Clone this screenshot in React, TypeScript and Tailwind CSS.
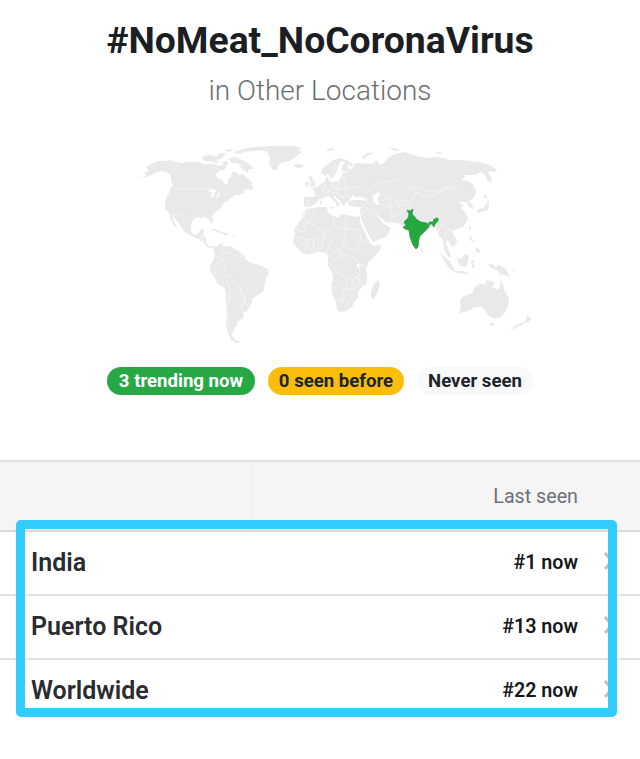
const land = [
  // North and Central America
  'M137 179L143 177 147 175 144 173 149 171 146 167 151 164 158 161 164 161 170 160 176 162 182 163 189 162 197 162 205 164 213 164 219 166 224 164 227 166 225 169 219 171 216 174 217 178 222 180 225 185 228 183 228 179 231 177 232 172 236 172 239 175 243 174 247 178 252 182 252 185 246 187 240 189 238 191 243 191 245 193 239 195 235 195 231 198 228 201 224 203 222 206 220 209 214 213 212 216 213 220 212 224 209 219 205 217 201 218 198 217 193 220 191 225 191 231 194 235 198 234 200 230 204 229 203 235 206 238 206 243 209 246 216 246 213 248 207 247 203 242 198 239 192 236 186 233 182 228 177 221 174 217 172 216 174 222 177 227 175 227 171 220 169 213 165 208 165 203 167 197 170 191 171 187 173 186 171 180 171 175 167 172 162 171 157 172 151 175 146 177Z',
  'M235 189l6-2 8-4 4 4 0 3-5-1-3 1-5 2z',
  'M202 157l6-2 7 1 4-1 6 2-5 2-5 1 6 2-6 1-5-2-6 0zM229 158l6-1 7 3 7 4 5 5-5 0-1 4-4-3-5-3 3-1-5-3-6 0zM222 162l4-1 3 3-4 2zM233 152l8-2 6-2 8-1 5 1-9 2-6 2-5 2-6-1zM217 154l5-1 5 1-5 2zM224 150l6-1 3 1-5 2z',
  'M238 152l6-3 12-2 14-1 12 0 13 0 6 2-2 2 3 2-5 3-2 3-6 3-6 1-4 3-3 6-4-2-3-6 1-5-3-6-5-2-9 1z',
  'M294 165l4-1 5 1 0 2-4 1-5-1zM209 230l5-1 6 2 5 2-6 0-4-2zM221 233l6 0 3 2-5 0zM232 235l3 0 0 1-3 0zM238 240l1 3',
  // South America
  'M213 248L217 247 219 244 222 243 224 246 231 246 235 249 240 252 243 254 246 260 251 263 257 264 263 267 268 269 269 273 266 278 265 284 263 292 258 295 253 298 251 305 246 312 243 312 244 317 240 320 237 322 237 326 234 328 234 332 231 334 235 340 241 342 236 343 231 340 228 333 226 326 227 318 226 306 226 294 225 288 218 284 214 277 210 270 210 265 213 261 215 255Z',
  // Africa
  'M305 210L312 208 320 207 327 207 328 213 334 216 338 218 341 214 347 215 357 217 360 216 360 222 364 230 367 238 370 243 373 246 381 244 380 250 374 257 368 263 366 269 367 275 367 283 361 288 358 292 358 298 354 302 352 307 346 311 339 312 337 309 336 303 332 294 331 285 333 279 332 272 328 265 328 256 326 253 322 252 318 252 312 254 304 254 299 250 293 243 293 240 295 235 294 230 298 223 302 218Z',
  'M378 280l2 5-3 9-3 5-3-1 0-5 2-8z',
  // Eurasia
  'M304 197L312 197 315 196 315 191 311 188 317 187 320 184 324 182 326 178 328 176 329 181 334 182 339 181 341 177 343 173 348 172 343 171 341 168 345 162 341 161 338 166 337 171 334 176 331 179 329 174 325 176 321 173 322 169 328 164 333 160 340 158 347 160 353 164 351 167 346 165 349 169 353 168 354 164 359 163 366 164 374 163 376 160 380 165 384 163 387 159 392 155 403 152 411 154 420 157 430 158 437 157 450 160 461 160 470 161 480 162 490 165 497 170 494 172 488 172 491 177 492 184 488 181 484 174 481 172 476 175 465 175 462 180 470 182 475 187 476 193 473 199 469 201 473 206 473 209 470 208 467 203 463 201 458 203 464 205 461 208 466 213 468 219 464 226 457 229 452 231 457 241 455 246 452 247 449 242 446 240 446 244 449 251 451 257 448 257 444 249 443 240 439 235 436 228 431 227 423 233 419 238 418 246 416 249 413 245 409 232 405 229 401 224 394 223 385 222 380 217 377 215 384 224 391 228 387 236 373 242 367 232 361 218 360 209 363 207 356 207 348 205 348 201 354 200 361 200 367 201 364 198 359 196 357 198 353 195 350 199 347 202 343 206 340 201 335 196 333 196 336 200 340 204 337 207 336 203 331 198 328 196 324 198 319 199 315 204 310 207 304 206Z',
  'M305 183l4-2 0 4-4 2zM308 177l4-1 1 4 3 4-1 2-6 1 2-3-1-4zM329 207l5 0-2 2zM320 201l2 0 0 3-2 0z',
  'M362 158l3-4 8-2-1 2-6 2-2 4zM325 150l6-2 5 1-6 2zM388 148l7 0 6 3-5 0zM434 153l5-1 4 1-4 1z',
  'M421 248l2 3-1 2-1-2z',
  'M477 210l6-2 4-4 1-6 1 6-1 6-7 2-4 1zM484 195l3 0 0 3-3 0zM469 226l2 0 0 4-2 0zM470 235l2 4 2 3-2 0-3-4zM475 247l5 3 0 3-4-1z',
  'M440 253l4 3 6 6 5 8-2 1-5-4-4-6zM454 271l8 0 6 2-1 1-8-1-6-1zM457 259l5-1 3-4 4 2-1 5-2 6-6-1zM471 261l4-1-2 3 2 4-3 1zM476 273l4 0-3 1z',
  'M488 264l4 0 3 3 5-2 6 4 4 8-6-2-4 0-3-5-6-2zM512 270l4-1-2 2z',
  // Oceania
  'M459 313L461 308 460 300 464 296 472 293 474 288 480 283 484 285 487 280 495 282 492 287 498 290 500 285 501 279 503 285 505 292 509 298 509 304 505 312 501 317 495 319 489 316 485 311 482 307 475 307 468 311 461 313Z',
  'M490 323l4 0-1 3-3 0zM528 315l2 3 2 1-5 4-2-2zM523 322l2 1-7 4-8 3 5-4z',
]

const water = [
  'M373 195L378 192 380 196 377 198 380 205 376 205 373 200Z',
  'M209 190l4-1 5 2-3 1-2 6-2-1 1-5-3 0zM216 193l4 0-1 4-3 1 2-4z',
  'M205 164l2 1-3 1zM357 264l2 0 0 4-2 0z',
]

const borders = [
  'M181 162l-9 11M173 189h37l5 1M222 197l7-4M169 214l8 1 6-1 5 4 4 4M199 240l3-5M203 236l-1 6M206 243l4 1',
  'M222 244l0 8 9 2 2-6M216 257l7 3 2 7-5 5-7 2M210 268l7-5M224 277l6-2 4 7 6 4 1 7 5 4-2 6 6 3M226 280l3 5 0 12 6-1 5-5M229 297l-2 14 2 15 4 10M244 302l-3 6 4 5M232 254l4 2 3-4M238 257l6-2M241 257v-5M229 260l4-3M240 293l5 5',
  'M305 211l-1 6-8 8M313 208l2 8-8 5 18 12 9-7-1-12M325 233l-10 7-8-1-2 12M296 230l8 2 3-11M334 226l12 3v-13M346 229h13M346 229l-3 18-9 4-6 6M359 229l2 10-4 8 8 8 8-3M325 233l-4 17M331 240l-5 15M343 247l12 3 2-3M329 263l8-5 8-3 9 2 6 7-1 12-6 3-10-1-2-4-8-4M332 288h11l6 2 7-3M334 300l9 0 0-10M343 300l6-9M346 307l4-8 5-4M354 276l6 4-2 8M360 263l5 3M307 244l6 9M313 240l1 12M318 240v12M296 237l9 2M300 245l4-2M340 255l0-8M365 266l-7-1M345 279l2 11M353 280l-2 10M367 243l-6-2',
  'M341 176l5 4-2 4 8 4 8-2 3 4M349 162l1 7-3 3M324 182l1 7-4 4M331 181l2 7 7 1 10-2M333 188l-6 2M319 185l5 5M315 196l5 1M308 198l0 8M337 189l1 6 6 2 7-1M336 162l-4 12M344 160l1 3M339 181l0 6M344 189l2 6M324 193l5-2 4 2 5 1M340 198l4-1M362 197l7 3M366 201l5 4M363 206l6 3-8 5M369 209l6 6 3 2M371 203l3 6 4 7M390 202l2 7-2 6 2 8M382 204l8 4 8-4 8 2M390 216l7 0 5-6M373 235l8-3 5-5M361 215l5 2',
  'M369 190l7-4-2-2 6-2 10 0 4-3 9 3 6 6 9 0 9 3 12 0 8-4 9 0 4 4M408 188l8 5 8 4 12-2 9-6 7 0M379 193l10 4 8 5 8-1 8-2 5-8M382 201l7-4M403 201l-5 6 8 3M412 200l-5 4 6 5M417 219l10 4 7-3 5-2M438 232l4-8 6 5 5 2M444 236l5-6 5 6M449 241l5-3M474 186l-4 8-6 4M467 204l3-3M501 265v9',
]

function WorldMap() {
  return (
    <svg viewBox="130 140 420 210" className="block h-[210px] w-[420px]" role="img" aria-label="World map">
      <g fill="#e9e9e9">
        {land.map((d) => (
          <path key={d} d={d} />
        ))}
      </g>
      <g fill="#ffffff">
        {water.map((d) => (
          <path key={d} d={d} />
        ))}
      </g>
      <g fill="none" stroke="#ffffff" strokeWidth=".6" strokeOpacity=".8">
        {borders.map((d) => (
          <path key={d} d={d} />
        ))}
      </g>
      <path
        d="M407 210L410 211 413 209 412 214 415 217 416 219 421 222 427 223 428 226 429 222 433 222 434 219 438 218 438 221 435 224 434 227 432 224 430 224 428 228 424 232 420 236 419 239 418 247 416 249 413 245 410 237 409 230 405 229 403 227 406 226 404 222 408 218 409 214Z"
        fill="#25a83e"
        stroke="#25963c"
        strokeWidth=".7"
      />
    </svg>
  )
}

const rows = [
  { place: 'India', seen: '#1 now' },
  { place: 'Puerto Rico', seen: '#13 now' },
  { place: 'Worldwide', seen: '#22 now' },
]

export default function App() {
  return (
    <main className="relative h-[759px] w-[640px] overflow-hidden bg-white font-[Roboto,sans-serif] text-[#212529]">
      <header className="flex h-[140px] flex-col items-center whitespace-nowrap pt-[18px]">
        <h1 className="text-[37.3px] font-bold leading-[44px] text-[#1b1e22]">#NoMeat_NoCoronaVirus</h1>
        <p className="mt-[11px] text-[28px] font-light leading-[36px] text-[#6c6f72]">in Other Locations</p>
      </header>
      <div className="pl-[130px]">
        <WorldMap />
      </div>
      <div className="mt-[17px] flex h-[28px] gap-[13px] whitespace-nowrap pl-[107px] text-[18.6px] font-bold leading-[29px]">
        <span className="w-[148px] rounded-full bg-[#28a745] text-center text-white">3 trending now</span>
        <span className="w-[136px] rounded-full bg-[#fbbd0b] text-center">0 seen before</span>
        <span className="w-[116px] rounded-full bg-[#f8f9fb] text-center">Never seen</span>
      </div>
      <section className="mt-[65px]">
        <div className="flex h-[72px] border-b-2 border-t-2 border-b-[#dadbdd] border-t-[#e0e1e2] bg-[#f5f5f5]">
          <div className="w-[253px] border-r border-[#f0f0f0]" />
          <div className="flex-1 pr-[62px] pt-px text-right text-[19.7px] leading-[67px] text-[#6c7278]">Last seen</div>
        </div>
        {rows.map((row) => (
          <div key={row.place} className="flex h-[64px] items-center border-b-2 border-[#e1e2e4] pl-[31px] last:border-0 last:pb-[2px]">
            <div className="flex-1 text-[25px] font-semibold text-[#292c31]">{row.place}</div>
            <div className="text-[19.7px] font-semibold text-[#16181b]">{row.seen}</div>
            <svg viewBox="0 0 10 18" className="-mt-[4px] ml-[25px] mr-[27px] h-[18px] w-[10px]" fill="none" stroke="#bfc1c3" strokeWidth="3">
              <path d="M2 1l7 8-7 8" />
            </svg>
          </div>
        ))}
      </section>
      <div className="absolute left-[16px] top-[519.5px] h-[197.5px] w-[601px] rounded-[5px] border-[9px] border-[#33ccff]" />
    </main>
  )
}
